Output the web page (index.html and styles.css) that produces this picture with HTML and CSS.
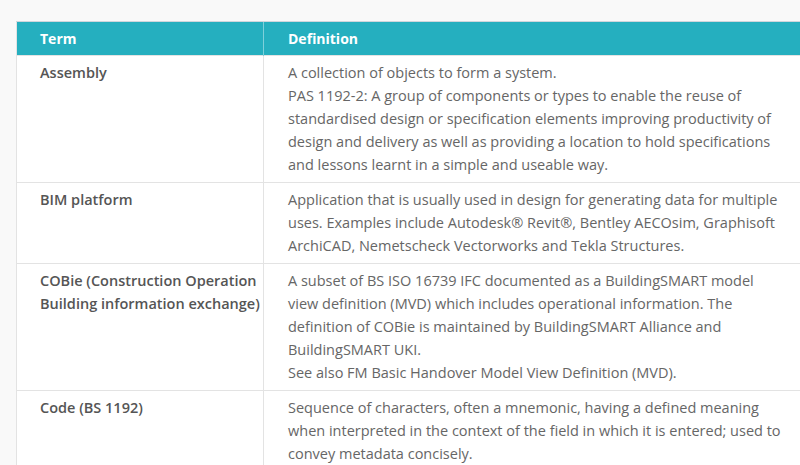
FILE: index.html
```html
<!DOCTYPE html>
<html>
<head>
<meta charset="utf-8">
<link rel="stylesheet" href="styles.css">
</head>
<body>
<div class="page">
  <table class="glossary">
    <colgroup>
      <col class="c-term">
      <col class="c-def">
    </colgroup>
    <thead>
      <tr>
        <th class="term-col">Term</th>
        <th class="def-col">Definition</th>
      </tr>
    </thead>
    <tbody>
      <tr>
        <td class="term">Assembly</td>
        <td class="def">A collection of objects to form a system.<br>PAS 1192-2: A group of components or types to enable the reuse of standardised design or specification elements improving productivity of design and delivery as well as providing a location to hold specifications and lessons learnt in a simple and useable way.</td>
      </tr>
      <tr>
        <td class="term">BIM platform</td>
        <td class="def">Application that is usually used in design for generating data for multiple uses. Examples include Autodesk® Revit®, Bentley AECOsim, Graphisoft ArchiCAD, Nemetscheck Vectorworks and Tekla Structures.</td>
      </tr>
      <tr>
        <td class="term">COBie (Construction Operation Building information exchange)</td>
        <td class="def">A subset of BS ISO 16739 IFC documented as a BuildingSMART model view definition (MVD) which includes operational information. The definition of COBie is maintained by BuildingSMART Alliance and BuildingSMART UKI.<br>See also FM Basic Handover Model View Definition (MVD).</td>
      </tr>
      <tr>
        <td class="term">Code (BS 1192)</td>
        <td class="def">Sequence of characters, often a mnemonic, having a defined meaning when interpreted in the context of the field in which it is entered; used to convey metadata concisely.</td>
      </tr>
    </tbody>
  </table>
</div>
</body>
</html>
```

FILE: styles.css
```css
html, body {
  margin: 0;
  padding: 0;
  background: #f9f9f9;
  overflow: hidden;
}
.page {
  padding: 21px 0 0 16px;
  width: 900px;
}
.glossary {
  border-collapse: collapse;
  width: 816px;
  table-layout: fixed;
  background: #ffffff;
  font-family: "Open Sans", "Noto Sans", sans-serif;
  font-size: 14px;
  line-height: 23px;
  border: 1px solid #e3e3e3;
}
.c-term {
  width: 247px;
}
.glossary th {
  background: #25afbf;
  color: #ffffff;
  font-weight: 700;
  text-align: left;
  padding: 5px 23px 5px 23px;
  border-left: 1px solid #7fd0da;
  border-top: 1px solid #cfd6dc;
}
.glossary th.term-col {
  border-left: 1px solid #e3e3e3;
}
.glossary th.def-col {
  padding-left: 24px;
}
.glossary td {
  vertical-align: top;
  padding: 5px 23px 6px 23px;
  border: 1px solid #e3e3e3;
}
.glossary td.term {
  color: #555555;
  font-weight: 600;
  font-size: 14.5px;
  padding-right: 0;
}
.glossary td.def {
  color: #666666;
  font-size: 14.5px;
  padding-left: 24px;
  padding-right: 44px;
}
```
